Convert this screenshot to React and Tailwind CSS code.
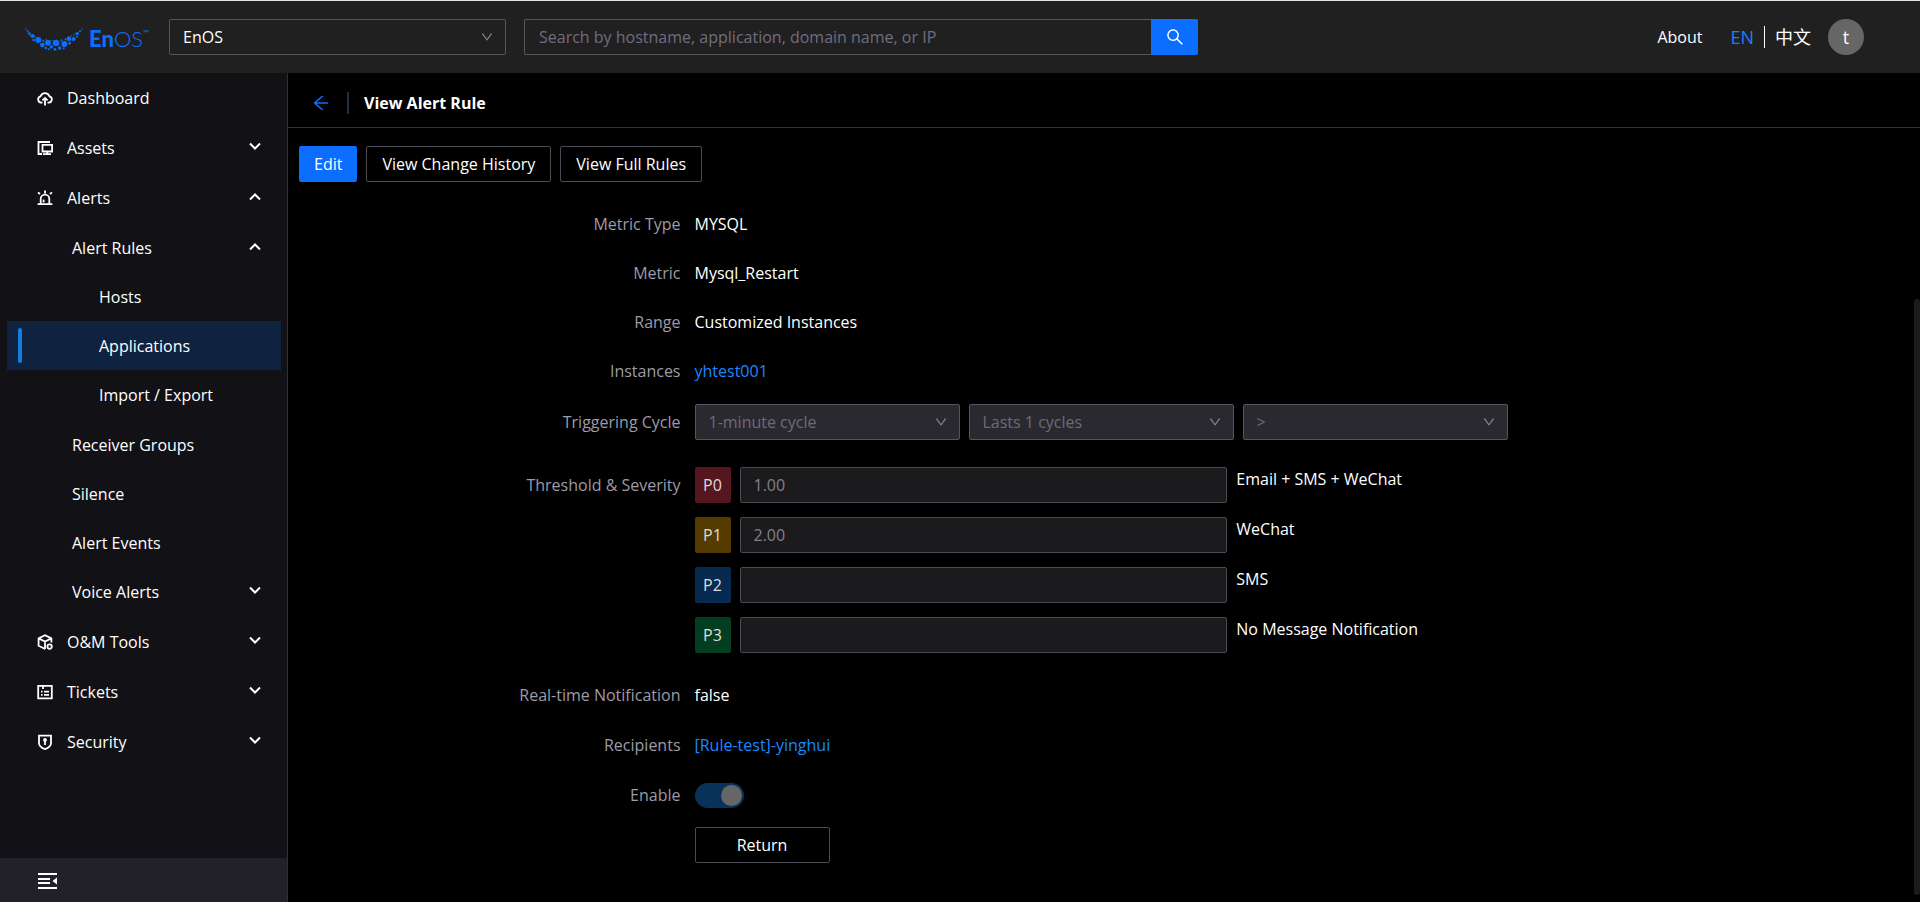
import { useState } from "react";
import { AiOutlineArrowLeft, AiOutlineDown, AiOutlineSearch } from "react-icons/ai";

const logoDots = [
  [77, 85, 2], [83, 92, 3], [89, 100, 4], [84, 98, 2], [98, 107, 6], [90, 106, 2], [106, 110, 2], [101, 119, 4],
  [115, 119, 9], [130, 121, 3], [127, 134, 7], [138, 117, 2], [144, 127, 9], [137, 143, 4], [146, 147, 3], [154, 140, 5],
  [156, 120, 2], [168, 128, 10], [165, 147, 4], [179, 143, 5], [184, 120, 3], [193, 131, 9], [191, 144, 3], [197, 117, 3],
  [207, 115, 7], [209, 129, 4], [221, 116, 6], [214, 106, 2], [222, 104, 2], [232, 100, 5], [231, 109, 3], [240, 93, 3],
  [226, 99, 2], [246, 86, 2]
];

const navItems = [
  { label: "Dashboard", icon: CloudIcon },
  { label: "Assets", icon: AssetsIcon, children: [] },
  {
    label: "Alerts",
    icon: AlertIcon,
    open: true,
    children: [
      {
        label: "Alert Rules",
        open: true,
        children: [{ label: "Hosts" }, { label: "Applications", active: true }, { label: "Import / Export" }]
      },
      { label: "Receiver Groups" },
      { label: "Silence" },
      { label: "Alert Events" },
      { label: "Voice Alerts", children: [] }
    ]
  },
  { label: "O&M Tools", icon: ToolsIcon, children: [] },
  { label: "Tickets", icon: TicketIcon, children: [] },
  { label: "Security", icon: ShieldIcon, children: [] }
];

const levelPadding = ["pl-[30px]", "pl-[65px]", "pl-[92px]"];
const submenuPadding = ["pt-px", "pb-px"];

const severities = [
  { level: "P0", value: "1.00", channel: "Email + SMS + WeChat", color: "bg-[#56161f]" },
  { level: "P1", value: "2.00", channel: "WeChat", color: "bg-[#553b00]" },
  { level: "P2", value: "", channel: "SMS", color: "bg-[#062a50]" },
  { level: "P3", value: "", channel: "No Message Notification", color: "bg-[#023f20]" }
];

function Svg({ children }) {
  return (
    <svg viewBox="0 0 16 16" className="size-4 shrink-0" fill="none" stroke="currentColor" strokeWidth="1.8" aria-hidden="true">
      {children}
    </svg>
  );
}

function CloudIcon() {
  return (
    <Svg>
      <path d="M5.5 12.6H4.2A3.2 3.2 0 0 1 3.6 6.3a4.6 4.6 0 0 1 8.8 0 3.2 3.2 0 0 1-.6 6.3h-1.3" />
      <path d="M8 15.4V8.2M5.4 10.4 8 7.9l2.6 2.5" />
    </Svg>
  );
}

function AssetsIcon() {
  return (
    <Svg>
      <path d="M13 2H1.5v12H5M5.5 4.9h9.6v6.6H5.5zM10.3 11.5V14M6 14.2h8" />
    </Svg>
  );
}

function AlertIcon() {
  return (
    <Svg>
      <path d="M.6 14.2h14.8M3.7 14V9a4.3 4.3 0 0 1 8.6 0v5M8 .6v2.8M1 2.4l2 1.6M15 2.4 13 4" />
      <path d="M6.6 9.6v2.8" />
    </Svg>
  );
}

function ToolsIcon() {
  return (
    <Svg>
      <path d="M8.2 15 1.6 11.8V4.4L8 1.2l6.4 3.2v4.2M1.6 4.4 8 7.6l6.4-3.2M8 7.6V15" />
      <circle cx="12.6" cy="12.6" r="2.2" />
    </Svg>
  );
}

function TicketIcon() {
  return (
    <Svg>
      <path d="M1.2 1.9h13.6v12.4H1.2zM6 1.9v3.2M4 7.6h1.6M7 7.6h5M4 10.8h1.6M7 10.8h5" />
    </Svg>
  );
}

function ShieldIcon() {
  return (
    <Svg>
      <path d="M2 1.6h12v7.6c0 3-3 4.8-6 5.9-3-1.1-6-2.9-6-5.9z" />
      <path d="M8 7v4" />
      <circle cx="8" cy="6" r="1" />
    </Svg>
  );
}

function NavChevron({ open }) {
  return (
    <svg viewBox="0 0 12 8" className="mr-5 mb-1 ml-auto h-2 w-3" fill="none" stroke="currentColor" strokeWidth="2" aria-hidden="true">
      <path d={open ? "M1 7.5 6 2.5l5 5" : "M1 1.5l5 5 5-5"} />
    </svg>
  );
}

function NavItem({ item, level = 0 }) {
  const [open, setOpen] = useState(Boolean(item.open));
  const Icon = item.icon;
  const rowClass = `relative flex h-[49px] w-full items-center gap-[14px] text-left ${levelPadding[level]} ${item.active ? "bg-[#0f2341]" : ""}`;

  return (
    <li>
      {item.children ? (
        <button type="button" className={rowClass} aria-expanded={open} onClick={() => setOpen((current) => !current)}>
          {Icon ? <Icon /> : null}
          {item.label}
          <NavChevron open={open} />
        </button>
      ) : (
        <a href="#" className={rowClass} aria-current={item.active ? "page" : undefined}>
          {item.active ? <span className="absolute inset-y-[7px] left-[11px] w-1 rounded-sm bg-[#177ddc]" /> : null}
          {Icon ? <Icon /> : null}
          {item.label}
        </a>
      )}
      {open && item.children.length > 0 ? (
        <ul className={submenuPadding[level]}>
          {item.children.map((child) => (
            <NavItem key={child.label} item={child} level={level + 1} />
          ))}
        </ul>
      ) : null}
    </li>
  );
}

function SelectBox({ label, value, className, disabled }) {
  return (
    <div className={`relative h-9 ${className}`}>
      <select
        aria-label={label}
        disabled={disabled}
        className={`size-full appearance-none rounded-xs border border-[#55545f] pl-[13px] ${disabled ? "bg-[#2a292f] text-[#6c6b7b] opacity-100" : "bg-transparent text-white"}`}
      >
        <option>{value}</option>
      </select>
      <AiOutlineDown className="pointer-events-none absolute top-[11px] right-3 size-[14px] text-[#8c8b96]" />
    </div>
  );
}

function FormRow({ label, htmlFor, children }) {
  const Label = htmlFor ? "label" : "span";

  return (
    <div className="grid grid-cols-[25%_50%] items-start">
      <Label htmlFor={htmlFor} className="pr-[14px] text-right leading-9 text-[#9c9ba6]">
        {label}
      </Label>
      <div className="flex min-h-9 items-center gap-[9px]">{children}</div>
    </div>
  );
}

function Header() {
  return (
    <header className="flex h-[73px] shrink-0 items-center border-t border-[#dfe2e2] bg-[#202020] pr-14 pl-6">
      <a href="#" className="flex w-[145px] shrink-0 items-center gap-[5px] text-[#0b6eff]">
        <svg viewBox="72 80 180 72" className="mt-1 h-6 w-[60px]" fill="currentColor" aria-hidden="true">
          {logoDots.map(([cx, cy, r]) => (
            <circle key={`${cx}-${cy}`} cx={cx} cy={cy} r={r} />
          ))}
        </svg>
        <span className="flex items-start pt-1 font-[Lato] text-[22px] leading-7">
          <b className="font-black">En</b>
          <span className="font-light">OS</span>
          <span className="text-[8px] leading-4">™</span>
        </span>
      </a>
      <SelectBox label="Organization" value="EnOS" className="w-[337px]" />
      <form role="search" className="ml-[18px] flex h-9 w-[674px]">
        <input
          type="text"
          aria-label="Search"
          placeholder="Search by hostname, application, domain name, or IP"
          className="min-w-0 flex-1 rounded-l-xs border border-r-0 border-[#55545f] px-[14px] placeholder:text-[#6f6e80]"
        />
        <button type="button" aria-label="Submit search" className="flex w-[47px] items-center justify-center rounded-r-xs bg-[#0b6eff]">
          <AiOutlineSearch className="size-5" />
        </button>
      </form>
      <div className="ml-auto flex items-center">
        <a href="#">About</a>
        <a href="#" className="ml-7 text-lg text-[#1a7fff]">
          EN
        </a>
        <span className="mx-[10px] h-[22px] w-px bg-white" />
        <a href="#" className="text-lg">
          中文
        </a>
        <button type="button" className="ml-[17px] size-9 rounded-full bg-[#666] text-lg">
          t
        </button>
      </div>
    </header>
  );
}

function Sidebar() {
  return (
    <aside className="flex w-72 shrink-0 flex-col border-r border-[#303036] bg-[#111116]">
      <nav className="pr-1.5 pl-[7px]">
        <ul className="flex flex-col gap-px">
          {navItems.map((item) => (
            <NavItem key={item.label} item={item} />
          ))}
        </ul>
      </nav>
      <button type="button" aria-label="Collapse menu" className="mt-auto flex h-11 items-center bg-[#22212a] pt-0.5 pl-[38px]">
        <svg viewBox="0 0 19 16" className="h-4 w-[19px]" fill="currentColor" aria-hidden="true">
          <path d="M0 0h19v2H0zM0 5h12v2H0zM0 9h12v2H0zM0 14h19v2H0zM19 4.5v7L14.5 8z" />
        </svg>
      </button>
    </aside>
  );
}

export default function App() {
  const [enabled] = useState(true);

  return (
    <div className="flex h-screen flex-col overflow-hidden bg-black font-['Open_Sans','Noto_Sans_CJK_SC',sans-serif] text-base text-white">
      <Header />
      <div className="flex min-h-0 flex-1">
        <Sidebar />
        <main className="relative min-w-0 flex-1">
          <div className="flex h-[55px] items-center border-b border-[#303036] pt-1.5 pl-[23px]">
            <button type="button" aria-label="Back" className="text-[#0b6eff]">
              <AiOutlineArrowLeft className="size-5" />
            </button>
            <span className="mr-[15px] ml-4 h-[22px] w-0.5 bg-[#252f3c]" />
            <h1 className="font-bold">View Alert Rule</h1>
          </div>

          <div className="flex gap-[9px] pt-[18px] pl-[11px]">
            <button type="button" className="h-9 rounded-xs bg-[#0b6eff] px-[15px]">
              Edit
            </button>
            <button type="button" className="h-9 rounded-xs border border-[#4b4a55] px-[15px]">
              View Change History
            </button>
            <button type="button" className="h-9 rounded-xs border border-[#4b4a55] px-[15px]">
              View Full Rules
            </button>
          </div>

          <div className="pt-6 pr-1.5">
            <div className="flex flex-col gap-[13px]">
              <FormRow label="Metric Type">MYSQL</FormRow>
              <FormRow label="Metric">Mysql_Restart</FormRow>
              <FormRow label="Range">Customized Instances</FormRow>
              <FormRow label="Instances">
                <a href="#" className="text-[#1a88ff]">
                  yhtest001
                </a>
              </FormRow>
            </div>

            <div className="mt-[15px]">
              <FormRow label="Triggering Cycle">
                <SelectBox label="Cycle length" value="1-minute cycle" className="flex-1" disabled />
                <SelectBox label="Duration" value="Lasts 1 cycles" className="flex-1" disabled />
                <SelectBox label="Operator" value=">" className="flex-1" disabled />
              </FormRow>
            </div>

            <div className="mt-[27px]">
              <FormRow label="Threshold & Severity">
                <div className="flex flex-1 flex-col gap-[14px]">
                  {severities.map((item) => (
                    <div key={item.level} className="flex gap-[9px]">
                      <label
                        htmlFor={item.level}
                        className={`flex size-9 shrink-0 items-center justify-center rounded-xs text-[#dcdcdc] ${item.color}`}
                      >
                        {item.level}
                      </label>
                      <input
                        id={item.level}
                        type="text"
                        defaultValue={item.value}
                        disabled
                        className="h-9 w-3/5 rounded-xs border border-[#4b4a55] bg-[#1b1b1d] px-[13px] text-[#82818b]"
                      />
                      <span className="whitespace-nowrap">{item.channel}</span>
                    </div>
                  ))}
                </div>
              </FormRow>
            </div>

            <div className="mt-6 flex flex-col gap-[14px]">
              <FormRow label="Real-time Notification">false</FormRow>
              <FormRow label="Recipients">
                <a href="#" className="text-[#1a88ff]">
                  [Rule-test]-yinghui
                </a>
              </FormRow>
              <FormRow label="Enable" htmlFor="enable">
                <span className="relative h-[25px] w-[49px] rounded-full bg-[#09325a]">
                  <input id="enable" type="checkbox" role="switch" checked={enabled} readOnly disabled className="absolute inset-0 size-full opacity-0" />
                  <span className="pointer-events-none absolute top-0.5 right-0.5 size-[21px] rounded-full bg-[#666]" />
                </span>
              </FormRow>
              <FormRow>
                <button type="button" className="h-9 w-[135px] rounded-xs border border-[#4b4a55]">
                  Return
                </button>
              </FormRow>
            </div>
          </div>

          <div className="absolute top-[226px] right-0 bottom-[7px] w-1.5 rounded-full bg-[#1b1b1b]" />
        </main>
      </div>
    </div>
  );
}
